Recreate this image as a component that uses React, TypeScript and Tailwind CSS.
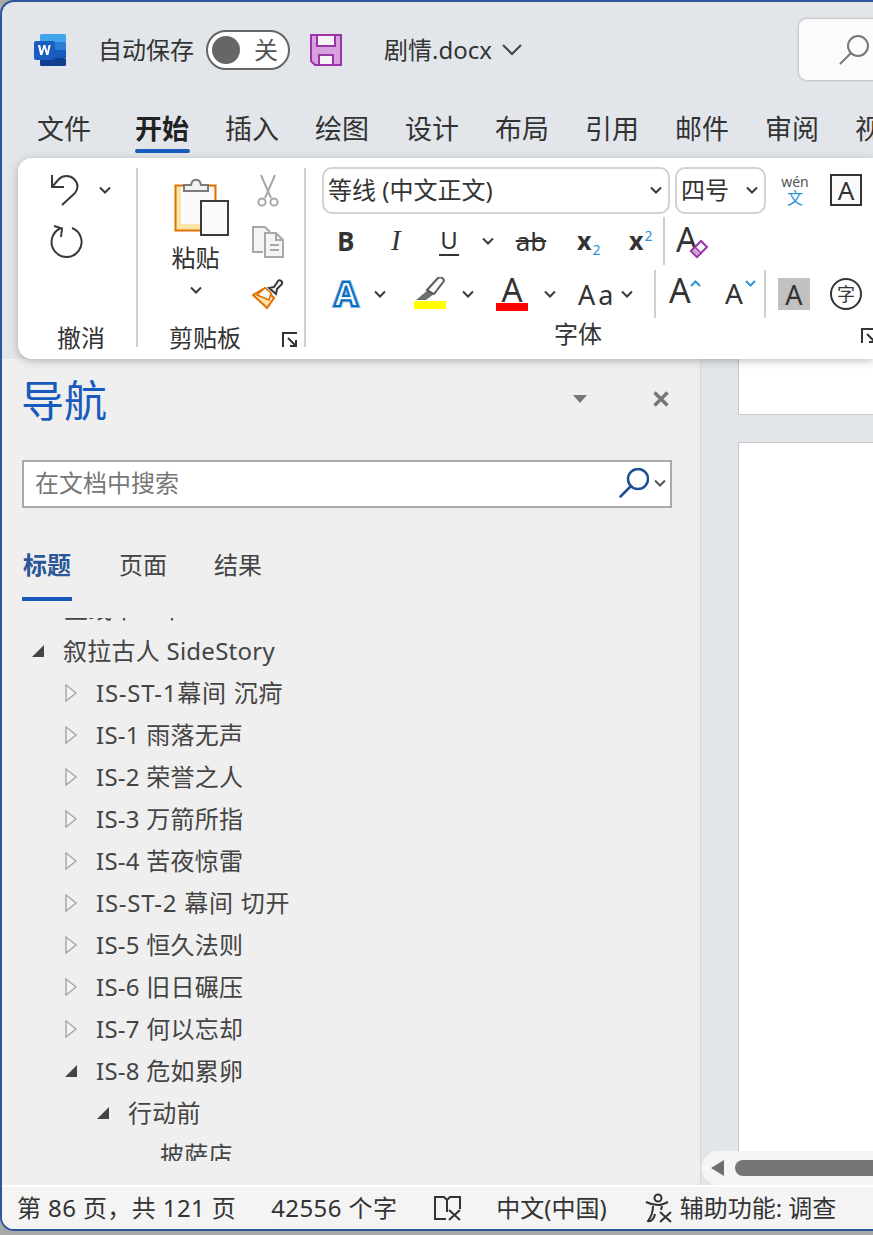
import { ReactNode } from 'react';

const FONT = 'font-["Noto_Sans","Noto_Sans_CJK_SC",sans-serif]';

function Chevron({ className = '', color = '#3a3a3a' }: { className?: string; color?: string }) {
  return (
    <svg width="12" height="8" viewBox="0 0 12 8" className={`shrink-0 ${className}`}>
      <path d="M1 1.5 6 6.5 11 1.5" fill="none" stroke={color} strokeWidth="2" />
    </svg>
  );
}

function Divider({ className = '' }: { className?: string }) {
  return <div className={`w-[2px] bg-[#cfcfcf] shrink-0 ${className}`} />;
}

function Launcher({ className = '' }: { className?: string }) {
  return (
    <svg width="16" height="16" viewBox="0 0 16 16" className={`shrink-0 ${className}`}>
      <path d="M1 15V1h14M6 6l8 8M14 8v6H8" fill="none" stroke="#333" strokeWidth="2" />
    </svg>
  );
}

function WordLogo() {
  return (
    <svg width="32" height="32" viewBox="0 0 32 32" className="shrink-0">
      <rect x="6" y="0" width="26" height="8" rx="1.5" fill="#41a5ee" />
      <rect x="6" y="8" width="26" height="8" fill="#2b7cd3" />
      <rect x="6" y="16" width="26" height="8" fill="#185abd" />
      <rect x="6" y="24" width="26" height="8" rx="1.5" fill="#103f91" />
      <rect x="0" y="7" width="21" height="19" rx="2" fill="#1a5cbf" />
      <path d="M4 11l2.2 10h2.1l2-6.8 2 6.8h2.1L16.6 11h-2l-1.3 6.5L11.400 11h-2l-1.800 6.500L6.200 11z" fill="#fff" />
    </svg>
  );
}

function SaveIcon() {
  return (
    <svg width="32" height="32" viewBox="0 0 32 32" className="shrink-0">
      <path d="M1 1h30v30H5l-4-4z" fill="#d8a0dd" stroke="#9a35a8" strokeWidth="2" />
      <rect x="7" y="1" width="18" height="11" fill="#f7f3f8" stroke="#9a35a8" strokeWidth="2" />
      <rect x="9" y="21" width="14" height="10" fill="#f7f3f8" stroke="#9a35a8" strokeWidth="2" />
    </svg>
  );
}

function UndoIcon() {
  return (
    <svg width="30" height="34" viewBox="0 0 30 34" className="shrink-0">
      <path d="M1 2v12h12M1 14 8 6c4-4 11-4 15 0 5 5 4 10 1 14L11 32" fill="none" stroke="#3a3a3a" strokeWidth="2" />
    </svg>
  );
}

function RedoIcon() {
  return (
    <svg width="34" height="34" viewBox="0 0 34 34" className="shrink-0">
      <path d="M22 4a15 15 0 1 1-12 .500" fill="none" stroke="#3a3a3a" strokeWidth="2" />
      <path d="M4 2l8 2.500-1 8.500" fill="none" stroke="#3a3a3a" strokeWidth="2" />
    </svg>
  );
}

function PasteIcon() {
  return (
    <svg width="56" height="62" viewBox="0 0 56 62" className="shrink-0">
      <rect x="1.500" y="9.500" width="40" height="45" fill="#fde3a7" stroke="#e07000" strokeWidth="2" />
      <rect x="7" y="11" width="33" height="37" fill="#fafafa" />
      <path d="M10 15v-6h7c1-7 9-7 10 0h7v6z" fill="#f2f2f2" stroke="#7a7a7a" strokeWidth="2" />
      <rect x="27" y="25" width="27" height="34" fill="#fafafa" stroke="#3a3a3a" strokeWidth="2" />
    </svg>
  );
}

function ScissorsIcon() {
  return (
    <svg width="22" height="34" viewBox="0 0 22 34" className="shrink-0">
      <path d="M4 1l10 23M18 1 8 24" fill="none" stroke="#a8a8a8" strokeWidth="2" />
      <circle cx="5" cy="28" r="3.600" fill="none" stroke="#a8a8a8" strokeWidth="2" />
      <circle cx="17" cy="28" r="3.600" fill="none" stroke="#a8a8a8" strokeWidth="2" />
    </svg>
  );
}

function CopyIcon() {
  return (
    <svg width="32" height="32" viewBox="0 0 32 32" className="shrink-0">
      <path d="M11 26H1V1h12l5 5" fill="#f4f4f4" stroke="#a8a8a8" strokeWidth="2" />
      <path d="M13 7h11l7 7v17H13z" fill="#f4f4f4" stroke="#a8a8a8" strokeWidth="2" />
      <path d="M24 7v7h7M18 19h9M18 24h9" fill="none" stroke="#a8a8a8" strokeWidth="2" />
    </svg>
  );
}

function PainterIcon() {
  return (
    <svg width="32" height="32" viewBox="0 0 32 32" className="shrink-0">
      <path d="M1 17 13 10 22 20 15 30z" fill="#fde3a7" stroke="#e07000" strokeWidth="2" />
      <path d="M5 17 17 22 19 15 13 10z" fill="#fafafa" stroke="#e07000" strokeWidth="1.500" />
      <path d="M17 10l5-1 4-6c1-2 5 0 4 3l-5 5-1 5z" fill="#fafafa" stroke="#3a3a3a" strokeWidth="2" />
    </svg>
  );
}

function GlyphA({ className = '' }: { className?: string }) {
  return <span className={`leading-none text-[#333] font-['Noto_Sans'] ${className}`}>A</span>;
}

function HighlightIcon() {
  return (
    <div className="w-[32px] h-[34px] flex flex-col items-center shrink-0">
      <svg width="32" height="24" viewBox="0 0 32 24">
        <path d="M2 23h10l8-6-6-4z" fill="#707070" />
        <path d="M13 13 24 1c2-2 6 0 6 3L20 17z" fill="#fafafa" stroke="#5a5a5a" strokeWidth="2" />
      </svg>
      <div className="w-[32px] h-[8px] bg-[#ffff00]" />
    </div>
  );
}

function ClearIcon() {
  return (
    <div className="relative w-[32px] h-[32px] shrink-0">
      <GlyphA className="text-[34px] absolute left-0 -top-[3px]" />
      <svg width="20" height="20" viewBox="0 0 20 20" className="absolute -right-[1px] bottom-[-2px]">
        <path d="M2 12 12 2l6 6-10 10z" fill="#fafafa" stroke="#9a35a8" strokeWidth="2" />
        <path d="M2 12l4-4 6 6-4 4z" fill="#d8a0dd" stroke="#9a35a8" strokeWidth="1.500" />
      </svg>
    </div>
  );
}

function GrowCaret({ down = false }: { down?: boolean }) {
  return (
    <svg width="11" height="7" viewBox="0 0 11 7" className="absolute top-[2px] -right-[1px]">
      <path d={down ? 'M1 1l4.500 4.500L10 1' : 'M1 6l4.500-4.500L10 6'} fill="none" stroke="#2b95d6" strokeWidth="2" />
    </svg>
  );
}

function SearchGlass({ color, stroke = 2 }: { color: string; stroke?: number }) {
  return (
    <svg width="30" height="30" viewBox="0 0 30 30" className="shrink-0">
      <circle cx="19" cy="11" r="10" fill="none" stroke={color} strokeWidth={stroke} />
      <path d="M12 18 1.500 28.500" fill="none" stroke={color} strokeWidth={stroke} strokeLinecap="round" />
    </svg>
  );
}

function Group({ width, label, launcher, children, labelClass = '' }: { width: string; label: string; launcher?: ReactNode; children: ReactNode; labelClass?: string }) {
  return (
    <div className={`${width} shrink-0 flex flex-col`}>
      <div className="h-[158px] flex flex-col">{children}</div>
      <div className="flex-1 flex items-center pb-[9px]">
        <span className={`text-[24px] leading-none text-[#333] ${labelClass}`}>{label}</span>
        {launcher}
      </div>
    </div>
  );
}

const tabs = ['文件', '开始', '插入', '绘图', '设计', '布局', '引用', '邮件', '审阅', '视图'];

type Row = { label: string; depth: number; state: 'open' | 'closed' | 'none'; wide?: boolean };

const treeRows: Row[] = [
  { label: '叙拉古人 SideStory', depth: 0, state: 'open' },
  { label: 'IS-ST-1幕间 沉疴', depth: 1, state: 'closed', wide: true },
  { label: 'IS-1 雨落无声', depth: 1, state: 'closed' },
  { label: 'IS-2 荣誉之人', depth: 1, state: 'closed' },
  { label: 'IS-3 万箭所指', depth: 1, state: 'closed' },
  { label: 'IS-4 苦夜惊雷', depth: 1, state: 'closed' },
  { label: 'IS-ST-2 幕间 切开', depth: 1, state: 'closed', wide: true },
  { label: 'IS-5 恒久法则', depth: 1, state: 'closed' },
  { label: 'IS-6 旧日碾压', depth: 1, state: 'closed' },
  { label: 'IS-7 何以忘却', depth: 1, state: 'closed' },
  { label: 'IS-8 危如累卵', depth: 1, state: 'open' },
  { label: '行动前', depth: 2, state: 'open' },
  { label: '披萨店', depth: 3, state: 'none' },
];

function TreeRow({ label, depth, state, wide }: Row) {
  const pad = ['pl-[29px]', 'pl-[62px]', 'pl-[94px]', 'pl-[126px]'][depth];
  return (
    <div className={`h-[42px] flex items-center shrink-0 ${pad}`}>
      <div className="w-[32px] shrink-0 flex items-center">
        {state === 'open' && (
          <svg width="14" height="14" viewBox="0 0 14 14">
            <path d="M1 13 13 1v12z" fill="#444" />
          </svg>
        )}
        {state === 'closed' && (
          <svg width="14" height="18" viewBox="0 0 14 18">
            <path d="M2 1l10 8-10 8z" fill="#f4f4f4" stroke="#a8a8a8" strokeWidth="1.500" />
          </svg>
        )}
      </div>
      <span className={`text-[24px] leading-none text-[#444] whitespace-nowrap ${wide ? 'tracking-[0.75px]' : 'tracking-[0.25px]'}`}>{label}</span>
    </div>
  );
}

export default function App() {
  return (
    <div className={`${FONT} w-[873px] h-[1235px] overflow-hidden bg-[#a9a9a9]`}>
      <div className="h-[1231px] flex flex-col bg-[#e2e6ea] border-t-2 border-l-2 border-b-2 border-[#2b579a] rounded-tl-[14px] rounded-bl-[14px] overflow-hidden">
        {/* title bar */}
        <div className="h-[96px] shrink-0 flex items-center pl-[32px] pb-[1px]">
          <WordLogo />
          <span className="ml-[32px] text-[24px] leading-none text-[#333] whitespace-nowrap">自动保存</span>
          <div className="ml-[12px] w-[84px] h-[40px] shrink-0 rounded-full border-2 border-[#666] bg-white flex items-center pl-[4px]">
            <div className="w-[28px] h-[28px] rounded-full bg-[#666]" />
            <span className="ml-[14px] text-[24px] leading-none text-[#555]">关</span>
          </div>
          <div className="ml-[20px]"><SaveIcon /></div>
          <span className="ml-[42px] text-[24px] leading-none text-[#333] whitespace-nowrap">剧情.docx</span>
          <svg width="20" height="12" viewBox="0 0 20 12" className="ml-[10px] shrink-0">
            <path d="M1 1l9 9 9-9" fill="none" stroke="#444" strokeWidth="2" />
          </svg>
          <div className="ml-[277px] w-[90px] h-[61px] shrink-0 bg-[#fbfbfb] rounded-l-[8px] shadow-[0_0_3px_rgba(0,0,0,0.35)] flex items-center pl-[40px]">
            <SearchGlass color="#777" />
          </div>
        </div>
        {/* ribbon tabs */}
        <div className="h-[60px] shrink-0 flex pl-[35px] gap-[36px] whitespace-nowrap">
          {tabs.map((t) => (
            <div key={t} className={`w-[54px] shrink-0 flex flex-col items-center ${t === '开始' ? 'ml-[8px]' : ''}`}>
              <span className={`text-[27px] leading-none mt-[17px] h-[34px] ${t === '开始' ? 'font-bold text-[#222]' : 'text-[#333]'}`}>{t}</span>
              {t === '开始' && <div className="w-[55px] h-[4px] rounded-full bg-[#185abd]" />}
            </div>
          ))}
        </div>
        {/* ribbon */}
        <div className="relative z-10 ml-[16px] h-[201px] shrink-0 bg-white rounded-l-[14px] shadow-[0_2px_8px_rgba(0,0,0,0.25)] flex pt-[10px]">
          <Group width="w-[118px]" label="撤消" labelClass="ml-[39px]">
            <div className="flex items-center pl-[33px] pt-[6px] h-[38px]">
              <UndoIcon />
              <Chevron className="ml-[18px]" />
            </div>
            <div className="pl-[32px] mt-[18px]"><RedoIcon /></div>
          </Group>
          <Divider className="h-[179px]" />
          <Group
            width="w-[166px]"
            label="剪贴板"
            labelClass="ml-[31px]"
            launcher={<Launcher className="ml-[41px] mt-[4px]" />}
          >
            <div className="flex h-full">
              <div className="w-[115px] flex flex-col items-center pt-[8px]">
                <div className="ml-[13px]"><PasteIcon /></div>
                <span className="text-[24px] leading-none text-[#333] mt-[8px]">粘贴</span>
                <Chevron className="mt-[16px]" />
              </div>
              <div className="w-[29px] flex flex-col items-center pt-[6px]">
                <ScissorsIcon />
                <div className="mt-[18px]"><CopyIcon /></div>
                <div className="mt-[20px]"><PainterIcon /></div>
              </div>
            </div>
          </Group>
          <Divider className="h-[179px]" />
          <div className="flex-1 min-w-0 flex flex-col">
            <div className="h-[46px] flex items-center pl-[16px] shrink-0 -mt-[1px]">
              <div className="w-[348px] h-[47px] shrink-0 rounded-[10px] border-2 border-[#d2d2d2] flex items-center pl-[4px] pr-[6px]">
                <span className="flex-1 text-[24px] leading-none text-[#333] whitespace-nowrap">等线 (中文正文)</span>
                <Chevron />
              </div>
              <div className="ml-[5px] w-[91px] h-[47px] shrink-0 rounded-[10px] border-2 border-[#d2d2d2] flex items-center pl-[4px] pr-[6px]">
                <span className="flex-1 text-[24px] leading-none text-[#333]">四号</span>
                <Chevron />
              </div>
              <div className="ml-[14px] w-[30px] shrink-0 flex flex-col items-center">
                <span className="text-[14px] leading-[16px] text-[#555]">wén</span>
                <span className="text-[16px] leading-[16px] text-[#2b95d6]">文</span>
              </div>
              <div className="ml-[20px] w-[32px] h-[32px] shrink-0 border-2 border-[#333] bg-[#fafafa] flex items-center justify-center">
                <GlyphA className="text-[26px]" />
              </div>
            </div>
            <div className="h-[49px] mt-[3px] flex items-center pl-[31px] shrink-0 text-[#333]">
              <span className="w-[16px] text-[26px] leading-none font-bold font-['Open_Sans']">B</span>
              <span className="ml-[38px] w-[16px] text-[29px] leading-none italic font-['Liberation_Serif']">I</span>
              <span className="ml-[32px] w-[20px] text-[24px] leading-[28px] border-b-2 border-[#333] text-center font-['Noto_Sans']">U</span>
              <Chevron className="ml-[23px]" />
              <span className="ml-[21px] w-[32px] text-[26px] leading-none line-through text-center font-['Noto_Sans']">ab</span>
              <div className="ml-[30px] w-[24px] flex items-baseline">
                <span className="text-[25px] leading-none font-bold font-['Open_Sans']">x</span>
                <span className="text-[14px] leading-none text-[#2b95d6] translate-y-[5px] ml-[1px]">2</span>
              </div>
              <div className="ml-[28px] w-[24px] flex items-baseline">
                <span className="text-[25px] leading-none font-bold font-['Open_Sans']">x</span>
                <span className="text-[14px] leading-none text-[#2b95d6] -translate-y-[9px] ml-[1px]">2</span>
              </div>
              <Divider className="h-[48px] ml-[10px]" />
              <div className="ml-[11px]"><ClearIcon /></div>
            </div>
            <div className="h-[48px] mt-[5px] flex items-center pl-[24px] shrink-0">
              <svg width="32" height="32" viewBox="0 0 32 32" className="shrink-0">
                <text x="16" y="28" textAnchor="middle" fontSize="34" fontWeight="700" fontFamily="Open Sans" fill="#fff" stroke="#7ab8e8" strokeWidth="4" paintOrder="stroke">A</text>
                <text x="16" y="28" textAnchor="middle" fontSize="34" fontWeight="700" fontFamily="Open Sans" fill="#f4f9fd" stroke="#0a6cbd" strokeWidth="2">A</text>
              </svg>
              <Chevron className="ml-[12px]" />
              <div className="ml-[28px]"><HighlightIcon /></div>
              <Chevron className="ml-[16px]" />
              <div className="ml-[22px] w-[32px] h-[34px] shrink-0 flex flex-col items-center">
                <GlyphA className="text-[33px] h-[26px] -mt-[4px]" />
                <div className="w-[32px] h-[8px] mt-[4px] bg-[#ff0000]" />
              </div>
              <Chevron className="ml-[16px]" />
              <span className="ml-[22px] w-[34px] shrink-0 text-[27px] leading-none tracking-[3px] text-[#333] font-['Noto_Sans'] whitespace-nowrap">Aa</span>
              <Chevron className="ml-[9px]" />
              <Divider className="h-[48px] ml-[21px]" />
              <div className="relative ml-[13px] w-[31px] h-[32px] shrink-0">
                <GlyphA className="text-[34px] absolute left-0 top-[-5px]" />
                <GrowCaret />
              </div>
              <div className="relative ml-[25px] w-[30px] h-[32px] shrink-0">
                <GlyphA className="text-[28px] absolute left-0 top-[1px]" />
                <GrowCaret down />
              </div>
              <Divider className="h-[48px] ml-[9px]" />
              <div className="ml-[12px] w-[32px] h-[32px] shrink-0 bg-[#c3c1bf] flex items-center justify-center">
                <GlyphA className="text-[27px]" />
              </div>
              <div className="ml-[20px] w-[32px] h-[32px] shrink-0 rounded-full border-2 border-[#333] flex items-center justify-center">
                <span className="text-[18px] leading-none text-[#333]">字</span>
              </div>
            </div>
            <div className="flex-1 flex items-center pl-[248px] pb-[9px]">
              <span className="shrink-0 whitespace-nowrap text-[24px] leading-none text-[#333]">字体</span>
              <Launcher className="ml-[259px] mt-[4px]" />
            </div>
          </div>
        </div>
        {/* body */}
        <div className="flex-1 min-h-0 flex">
          <div className="w-[699px] shrink-0 bg-[#efefef] border-r border-[#d8d8d8] flex flex-col">
            <div className="h-[82px] shrink-0 flex items-center pl-[19px]">
              <span className="text-[43px] leading-none text-[#185abd]">导航</span>
              <svg width="14" height="8" viewBox="0 0 14 8" className="ml-[466px] mt-[-2px] shrink-0">
                <path d="M0 0h14L7 8z" fill="#777" />
              </svg>
              <svg width="16" height="16" viewBox="0 0 16 16" className="ml-[66px] mt-[-2px] shrink-0">
                <path d="M1.500 1.500l13 13M14.500 1.500l-13 13" fill="none" stroke="#777" strokeWidth="3.500" />
              </svg>
            </div>
            <div className="ml-[20px] mt-[19px] w-[650px] h-[48px] shrink-0 bg-white border-2 border-[#a9a9a9] flex items-center pl-[11px] pr-[4px] pb-[2px]">
              <span className="flex-1 text-[24px] leading-none text-[#777]">在文档中搜索</span>
              <SearchGlass color="#1d4f91" stroke={2.500} />
              <Chevron className="ml-[5px]" color="#555" />
            </div>
            <div className="ml-[20px] mt-[36px] h-[57px] shrink-0 flex gap-[47px]">
              <div className="w-[50px] flex flex-col items-center">
                <span className="text-[24px] leading-none font-bold text-[#2b579a] h-[53px] pt-[9px]">标题</span>
                <div className="w-[50px] h-[4px] bg-[#185abd]" />
              </div>
              <span className="text-[24px] leading-none text-[#444] pt-[9px]">页面</span>
              <span className="text-[24px] leading-none text-[#444] pt-[9px]">结果</span>
            </div>
            <div className="mt-[17px] h-[543px] shrink-0 overflow-hidden flex flex-col">
              <div className="-mt-[30px] shrink-0 flex flex-col">
                <div className="h-[42px] flex items-center pl-[62px]">
                  <span className="text-[24px] leading-none text-[#444] whitespace-nowrap">主线十一章</span>
                </div>
                {treeRows.map((r) => (
                  <TreeRow key={r.label} {...r} />
                ))}
              </div>
            </div>
          </div>
          <div className="flex-1 min-w-0 flex flex-col">
            <div className="ml-[37px] h-[56px] shrink-0 bg-white border-l border-b border-[#c6c8ca]" />
            <div className="ml-[37px] mt-[27px] flex-1 bg-white border-l border-t border-[#c6c8ca]" />
            <div className="ml-[1px] h-[34px] shrink-0 bg-[#f5f5f5] rounded-tl-[16px] rounded-bl-[16px] flex items-center pl-[9px]">
              <svg width="13" height="16" viewBox="0 0 13 16" className="shrink-0">
                <path d="M13 0v16L0 8z" fill="#6f6f6f" />
              </svg>
              <div className="ml-[11px] flex-1 h-[16px] bg-[#757575] rounded-l-full" />
            </div>
          </div>
        </div>
        {/* status bar */}
        <div className="h-[44px] shrink-0 bg-[#f4f4f4] border-t-2 border-white flex items-center pl-[15px] text-[24px] leading-none text-[#333] whitespace-nowrap">
          <span className="tracking-[0.4px]">第 86 页，共 121 页</span>
          <span className="ml-[35px] tracking-[0.4px]">42556 个字</span>
          <svg width="28" height="26" viewBox="0 0 28 26" className="ml-[37px] shrink-0">
            <path d="M12 24H1V2h9l3 3v12M13 5l3-3h10v12" fill="none" stroke="#333" strokeWidth="2" />
            <path d="M15 15l11 10M26 15 15 25" fill="none" stroke="#333" strokeWidth="2" />
          </svg>
          <span className="ml-[34px]">中文(中国)</span>
          <svg width="28" height="30" viewBox="0 0 28 30" className="ml-[38px] shrink-0">
            <circle cx="13" cy="5" r="3.500" fill="none" stroke="#333" strokeWidth="2" />
            <path d="M1 9c4 2 7 3 12 3 3 0 6-1 10-3M8 13c0 6-1 10-5 15 3 1 6-2 7-7M17 13l-1 4" fill="none" stroke="#333" strokeWidth="2" />
            <path d="M15 19l11 10M26 19 15 29" fill="none" stroke="#333" strokeWidth="2" />
          </svg>
          <span className="ml-[7px]">辅助功能: 调查</span>
        </div>
      </div>
    </div>
  );
}
